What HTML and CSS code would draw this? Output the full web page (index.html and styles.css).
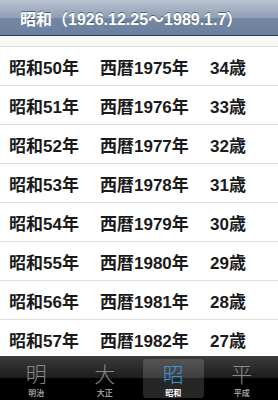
FILE: index.html
```html
<!DOCTYPE html>
<html lang="ja">
<head>
<meta charset="utf-8">
<title>昭和</title>
<link rel="stylesheet" href="styles.css">
</head>
<body>
<div class="app">
  <header class="navbar"><h1 class="title">昭和（1926.12.25～1989.1.7）</h1></header>
  <main class="list">
    <div class="row"><span class="c1">昭和50年</span><span class="c2">西暦1975年</span><span class="c3">34歳</span></div>
    <div class="row"><span class="c1">昭和51年</span><span class="c2">西暦1976年</span><span class="c3">33歳</span></div>
    <div class="row"><span class="c1">昭和52年</span><span class="c2">西暦1977年</span><span class="c3">32歳</span></div>
    <div class="row"><span class="c1">昭和53年</span><span class="c2">西暦1978年</span><span class="c3">31歳</span></div>
    <div class="row"><span class="c1">昭和54年</span><span class="c2">西暦1979年</span><span class="c3">30歳</span></div>
    <div class="row"><span class="c1">昭和55年</span><span class="c2">西暦1980年</span><span class="c3">29歳</span></div>
    <div class="row"><span class="c1">昭和56年</span><span class="c2">西暦1981年</span><span class="c3">28歳</span></div>
    <div class="row"><span class="c1">昭和57年</span><span class="c2">西暦1982年</span><span class="c3">27歳</span></div>
  </main>
  <nav class="tabbar">
    <div class="tab"><span class="glyph">明</span><span class="label">明治</span></div>
    <div class="tab"><span class="glyph">大</span><span class="label">大正</span></div>
    <div class="tab active"><span class="glyph">昭</span><span class="label">昭和</span></div>
    <div class="tab"><span class="glyph">平</span><span class="label">平成</span></div>
  </nav>
</div>
</body>
</html>
```

FILE: styles.css
```css
* { box-sizing: border-box; }
html, body { margin: 0; padding: 0; }
body {
  width: 278px;
  height: 400px;
  overflow: hidden;
  font-family: "Liberation Sans", "Noto Sans CJK JP", sans-serif;
  background: #fff;
}
.app {
  display: flex;
  flex-direction: column;
  height: 400px;
}
.navbar {
  height: 36px;
  flex: none;
  background: linear-gradient(#bac4d2, #8f9fb6 50%, #7387a4 51%, #6c819f);
  border-bottom: 1px solid #2f3a4a;
  display: flex;
  align-items: center;
  padding-left: 20px;
}
.title {
  margin: 0;
  font-size: 16px;
  font-weight: bold;
  color: #fff;
  text-shadow: 0 -1px 0 rgba(40, 50, 70, 0.6);
  white-space: nowrap;
}
.list {
  flex: 1;
  overflow: hidden;
  padding-top: 10px;
  background: #f8f8f8;
}
.row {
  height: 39px;
  display: flex;
  align-items: center;
  background: #fff;
  border-top: 1px solid #dedede;
  padding-left: 9px;
  font-size: 17px;
  font-weight: bold;
  color: #1a1a1a;
  white-space: nowrap;
}
.c1 { width: 91px; }
.c2 { width: 110px; }
.tabbar {
  height: 44px;
  flex: none;
  display: flex;
  padding: 3px 2px 2px;
  background: linear-gradient(#3c3c3c, #1c1c1c 50%, #000 51%, #000);
}
.tab {
  flex: 1;
  display: flex;
  flex-direction: column;
  align-items: center;
  justify-content: flex-start;
  border-radius: 3px;
  margin: 0 4px;
}
.tab.active {
  background: rgba(255, 255, 255, 0.15);
}
.glyph {
  font-family: "Noto Sans CJK JP", sans-serif;
  font-weight: 300;
  font-size: 21px;
  line-height: 21px;
  margin-top: 4px;
  color: #8a8a8a;
}
.tab.active .glyph {
  color: #3f95d6;
}
.label {
  font-family: "Noto Sans CJK JP", sans-serif;
  font-size: 8px;
  font-weight: bold;
  line-height: 9px;
  margin-top: 4px;
  color: #9a9a9a;
}
.tab.active .label { color: #fff; }
```
